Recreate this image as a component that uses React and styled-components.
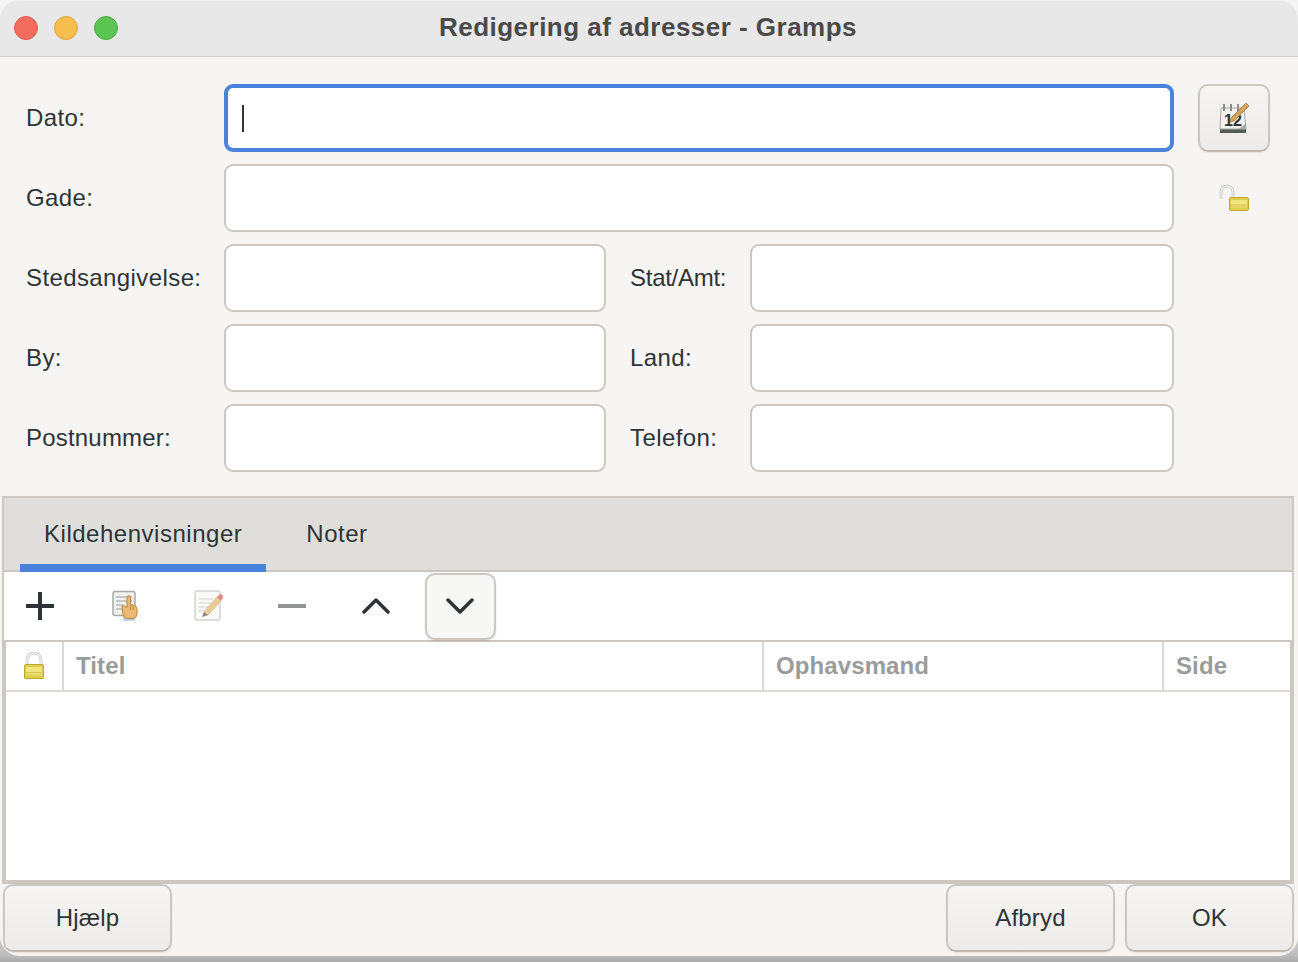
import React from "react";
import styled, { createGlobalStyle } from "styled-components";

const GlobalStyle = createGlobalStyle`
  html, body {
    margin: 0;
    padding: 0;
    width: 1298px;
    height: 962px;
    overflow: hidden;
    background: linear-gradient(#f4f4f4 0, #f4f4f4 900px, #bdbdbd 955px, #a9a9a9 962px);
  }
  * {
    box-sizing: border-box;
  }
`;

const Window = styled.div`
  width: 1298px;
  height: 956px;
  display: flex;
  flex-direction: column;
  background: #f6f5f3;
  border-radius: 20px;
  overflow: hidden;
  font-family: "Liberation Sans", Arial, sans-serif;
  font-size: 24px;
  letter-spacing: 0.4px;
  color: #2e3436;
`;

const TitleBar = styled.div`
  position: relative;
  height: 57px;
  flex: none;
  display: flex;
  align-items: center;
  justify-content: center;
  padding-bottom: 2px;
  background: #e8e8e8;
  border-top: 1px solid #f2f2f2;
  border-bottom: 1px solid #cfcfcf;
`;

const Lights = styled.div`
  position: absolute;
  left: 14px;
  top: 15px;
  display: flex;
  gap: 16px;
`;

const Light = styled.span`
  width: 24px;
  height: 24px;
  border-radius: 50%;
  background: ${(p) => p.$fill};
  border: 1px solid ${(p) => p.$edge};
`;

const Title = styled.div`
  font-size: 26px;
  font-weight: 700;
  letter-spacing: 0.48px;
  color: #4a4a4a;
  margin-left: -2px;
`;

const Form = styled.div`
  display: grid;
  grid-template-columns: 198px 382px 24px 120px 424px 96px;
  grid-auto-rows: 68px;
  row-gap: 12px;
  padding: 27px 0 0 26px;
  height: 439px;
  flex: none;
  align-items: center;
`;

const Label = styled.label`
  line-height: 68px;
  letter-spacing: ${(p) => p.$spacing || "0.4px"};
`;

const Entry = styled.div`
  grid-column: ${(p) => p.$span || "auto"};
  height: 68px;
  background: #fff;
  border: 2px solid #cdc7c2;
  border-radius: 9px;
`;

const FocusEntry = styled(Entry)`
  border: 4px solid #4a83dd;
  display: flex;
  align-items: center;
  padding-left: 14px;
`;

const Caret = styled.span`
  width: 2px;
  height: 27px;
  background: #2e3436;
`;

const SideCell = styled.div`
  display: flex;
  align-items: center;
  justify-content: center;
  height: 68px;
  width: 72px;
  margin-left: 24px;
`;

const Gap = styled.span``;

const RaisedButton = styled.button`
  display: flex;
  align-items: center;
  justify-content: center;
  padding: 0;
  font: inherit;
  letter-spacing: 0.2px;
  color: #2e3436;
  background: linear-gradient(#f6f5f4, #edebe9);
  border: 2px solid #cdc7c2;
  border-bottom-color: #bfb8b1;
  border-radius: 10px;
  box-shadow: 0 1px 2px rgba(0, 0, 0, 0.08);
`;

const IconButton = styled(RaisedButton)`
  width: 72px;
  height: 68px;
`;

const Notebook = styled.div`
  flex: none;
  height: 388px;
  margin: 0 4px 0 2px;
  border: 2px solid #cdc7c2;
  display: flex;
  flex-direction: column;
  background: #fff;
`;

const TabBar = styled.div`
  height: 74px;
  flex: none;
  display: flex;
  gap: 16px;
  padding-left: 16px;
  background: #dfdedb;
  border-bottom: 2px solid #cdc7c2;
`;

const Tab = styled.div`
  height: 74px;
  padding: 6px 24px 0;
  display: flex;
  align-items: center;
  letter-spacing: 0.52px;
  border-bottom: 8px solid ${(p) => (p.$active ? "#4a83dd" : "transparent")};
`;

const Toolbar = styled.div`
  height: 70px;
  flex: none;
  display: grid;
  grid-template-columns: repeat(6, 72px);
  column-gap: 12px;
  align-items: center;
  justify-items: center;
  border-bottom: 2px solid #cdc7c2;
`;

const ToolSlot = styled.div`
  width: 71px;
  height: 67px;
  display: flex;
  align-items: center;
  justify-content: center;
  border-radius: 10px;
  border: 2px solid ${(p) => (p.$hover ? "#cdc7c2" : "transparent")};
  background: ${(p) => (p.$hover ? "#f7f7f5" : "transparent")};
  box-shadow: ${(p) => (p.$hover ? "0 1px 2px rgba(0,0,0,.12)" : "none")};
`;

const List = styled.div`
  flex: 1;
  display: flex;
  flex-direction: column;
  border: 2px solid #cdc7c2;
  border-top: none;
`;

const ColumnHeader = styled.div`
  height: 50px;
  flex: none;
  display: grid;
  grid-template-columns: 58px 700px 400px 1fr;
  border-bottom: 2px solid #dcd9d6;
`;

const HeadCell = styled.div`
  display: flex;
  align-items: center;
  padding-left: 12px;
  font-weight: 700;
  letter-spacing: 0.1px;
  color: #9a9c9c;
  border-right: ${(p) => (p.$last ? "none" : "2px solid #dcd9d6")};
`;

const LockCell = styled(HeadCell)`
  padding-left: 0;
  justify-content: center;
`;

const Actions = styled.div`
  flex: 1;
  display: flex;
  gap: 10px;
  padding: 0 4px 4px 3px;
`;

const ActionButton = styled(RaisedButton)`
  width: 169px;
  height: 68px;
  &:first-child {
    margin-right: auto;
  }
`;

const stroke = "#2e3436";

const CalendarIcon = () => (
  <svg width="32" height="34" viewBox="0 0 32 34">
    <rect x="2" y="27" width="26" height="5" fill="#555b58" />
    <path d="M3 7h23l2 21H2z" fill="#f1f1ef" stroke="#a9a9a6" />
    <path d="M21 28l7-6v6z" fill="#a8aca8" />
    <path d="M6 3v7M13 3v7M20 3v7" stroke="#8c8c8a" strokeWidth="2" />
    <text x="6" y="25" fontFamily="Liberation Sans" fontWeight="700" fontSize="16" fill="#333">12</text>
    <path d="M13 17L28 2l3 3L16 20l-4 1z" fill="#d6a35c" stroke="#9c7034" strokeWidth=".7" />
  </svg>
);

const LockBody = ({ x, y, w, h }) => (
  <g>
    <rect x={x + 0.5} y={y + 0.5} width={w - 1} height={h - 1} rx="1.500" fill="#dfce4e" stroke="#bfa92a" />
    <rect x={x + 2} y={y + 3} width={w - 4} height={h - 6} fill="#f0e57e" />
    <path d={`M${x + 2} ${y + h / 2 + 1}h${w - 4}M${x + 2} ${y + h - 4}h${w - 4}`} stroke="#d5c44a" />
  </g>
);

const OpenLockIcon = () => (
  <svg width="34" height="28" viewBox="0 0 34 28">
    <path d="M4 15V8a6 6 0 0 1 12 0v5" fill="none" stroke="#c9c9c7" strokeWidth="3" />
    <path d="M4 15V8a6 6 0 0 1 12 0v5" fill="none" stroke="#f4f4f4" strokeWidth="1.200" />
    <LockBody x={12} y={13} w={20} h={14} />
  </svg>
);

const ClosedLockIcon = () => (
  <svg width="22" height="28" viewBox="0 0 22 28">
    <path d="M4 13V8a7 7 0 0 1 14 0v5" fill="none" stroke="#cfcfcd" strokeWidth="3" />
    <path d="M4 13V8a7 7 0 0 1 14 0v5" fill="none" stroke="#f6f6f6" strokeWidth="1.200" />
    <LockBody x={1} y={12} w={20} h={15} />
  </svg>
);

const SourceIcon = () => (
  <svg width="28" height="32" viewBox="0 0 28 32">
    <rect x="14" y="24" width="10" height="6" fill="#dce8f7" stroke="#8fb2e0" />
    <rect x="3" y="1.500" width="22" height="24" rx="2" fill="#f0f0ee" stroke="#a8aaa8" strokeWidth="1.500" />
    <path d="M6 7h16M6 11h16M6 15h7M6 19h6" stroke="#b9bbb8" strokeWidth="1.500" />
    <path d="M17 7.500a1.800 1.800 0 0 1 3.600 0v7l2.400.5 2.500 1 1.500 2.500v5.500a5 5 0 0 1-5 4.500h-4a5 5 0 0 1-5-4l-1-7a1.500 1.500 0 0 1 3-1l2 1z" fill="#e9b872" stroke="#bf8433" />
    <path d="M20.600 15v5M23 15.500v4.500" stroke="#bf8433" strokeWidth=".8" />
  </svg>
);

const NoteIcon = () => (
  <svg width="32" height="32" viewBox="0 0 32 32">
    <rect x="3" y="1" width="25" height="29" rx="2" fill="#f9f9f8" stroke="#d4d4d2" strokeWidth="1.500" />
    <path d="M7 9h14M7 13h12M7 17h9M7 21h6" stroke="#d4d4d0" strokeWidth="1.200" />
    <path d="M12 22L25 7l4 4-13 14-5 1z" fill="#eccb98" stroke="#d3ae77" strokeWidth=".6" />
    <path d="M25 7l2-2a2 2 0 0 1 3 4l-1 2z" fill="#e0888a" />
    <path d="M10 27l2-5 4 3z" fill="#8b8b86" />
  </svg>
);

const PlusIcon = () => (
  <svg width="28" height="28" viewBox="0 0 28 28">
    <path d="M14 0v28M0 14h28" stroke={stroke} strokeWidth="4" />
  </svg>
);

const MinusIcon = () => (
  <svg width="28" height="28" viewBox="0 0 28 28">
    <path d="M0 14h28" stroke="#959797" strokeWidth="4" />
  </svg>
);

const ChevronIcon = ({ up }) => (
  <svg width="28" height="18" viewBox="0 0 28 18">
    <path
      d={up ? "M2 15L14 3l12 12" : "M2 3l12 12L26 3"}
      fill="none"
      stroke={stroke}
      strokeWidth="3.500"
      strokeLinecap="round"
      strokeLinejoin="round"
    />
  </svg>
);

export default function App() {
  return (
    <Window>
      <GlobalStyle />
      <TitleBar>
        <Lights>
          <Light $fill="#f26d60" $edge="#dc5a4f" />
          <Light $fill="#f6bd4f" $edge="#dfa23c" />
          <Light $fill="#5cc654" $edge="#4bab43" />
        </Lights>
        <Title>Redigering af adresser - Gramps</Title>
      </TitleBar>

      <Form>
        <Label>Dato:</Label>
        <FocusEntry $span="2 / span 4">
          <Caret />
        </FocusEntry>
        <SideCell>
          <IconButton>
            <CalendarIcon />
          </IconButton>
        </SideCell>

        <Label>Gade:</Label>
        <Entry $span="2 / span 4" />
        <SideCell>
          <OpenLockIcon />
        </SideCell>

        <Label>Stedsangivelse:</Label>
        <Entry />
        <Gap />
        <Label $spacing="-0.27px">Stat/Amt:</Label>
        <Entry />
        <Gap />

        <Label>By:</Label>
        <Entry />
        <Gap />
        <Label>Land:</Label>
        <Entry />
        <Gap />

        <Label $spacing="0.2px">Postnummer:</Label>
        <Entry />
        <Gap />
        <Label>Telefon:</Label>
        <Entry />
      </Form>

      <Notebook>
        <TabBar>
          <Tab $active>Kildehenvisninger</Tab>
          <Tab>Noter</Tab>
        </TabBar>
        <Toolbar>
          <ToolSlot><PlusIcon /></ToolSlot>
          <ToolSlot><SourceIcon /></ToolSlot>
          <ToolSlot><NoteIcon /></ToolSlot>
          <ToolSlot><MinusIcon /></ToolSlot>
          <ToolSlot><ChevronIcon up /></ToolSlot>
          <ToolSlot $hover><ChevronIcon /></ToolSlot>
        </Toolbar>
        <List>
          <ColumnHeader>
            <LockCell><ClosedLockIcon /></LockCell>
            <HeadCell>Titel</HeadCell>
            <HeadCell>Ophavsmand</HeadCell>
            <HeadCell $last>Side</HeadCell>
          </ColumnHeader>
        </List>
      </Notebook>

      <Actions>
        <ActionButton>Hjælp</ActionButton>
        <ActionButton>Afbryd</ActionButton>
        <ActionButton>OK</ActionButton>
      </Actions>
    </Window>
  );
}
